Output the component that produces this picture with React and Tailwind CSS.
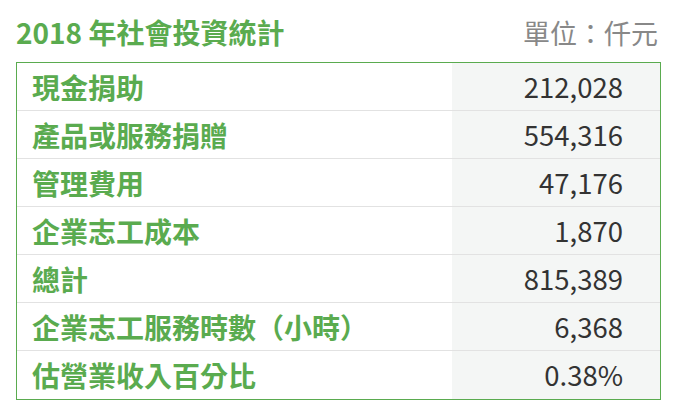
const rows = [
    ['現金捐助', '212,028'],
    ['產品或服務捐贈', '554,316'],
    ['管理費用', '47,176'],
    ['企業志工成本', '1,870'],
    ['總計', '815,389'],
    ['企業志工服務時數（小時）', '6,368'],
    ['估營業收入百分比', '0.38%'],
]

export default function App() {
    return (
        <div className="w-[676px] h-[418px] bg-white px-4 pt-[12px]" style={{ fontFamily: '"Noto Sans CJK TC", "Noto Sans", sans-serif' }}>
            <div className="flex items-center justify-between h-[40px] mb-[10px]">
                <div className="text-[28px] font-bold text-[#5aab4f] leading-none">2018 年社會投資統計</div>
                <div className="text-[27px] text-[#888888] leading-none pr-[2px]">單位：仟元</div>
            </div>
            <div className="border border-[#5aab4f] w-[645px]">
                {rows.map(([label, value], i) => (
                    <div key={label} className={`flex h-[48px] ${i < rows.length - 1 ? 'border-b border-[#e2e2e2]' : ''}`}>
                        <div className="w-[435px] flex items-center pl-[15px] text-[28px] font-bold text-[#5aab4f] leading-none">{label}</div>
                        <div className="flex-1 bg-[#f4f6f5] flex items-center justify-end pr-[37px] text-[27.5px] text-[#333333] leading-none">{value}</div>
                    </div>
                ))}
            </div>
        </div>
    )
}
